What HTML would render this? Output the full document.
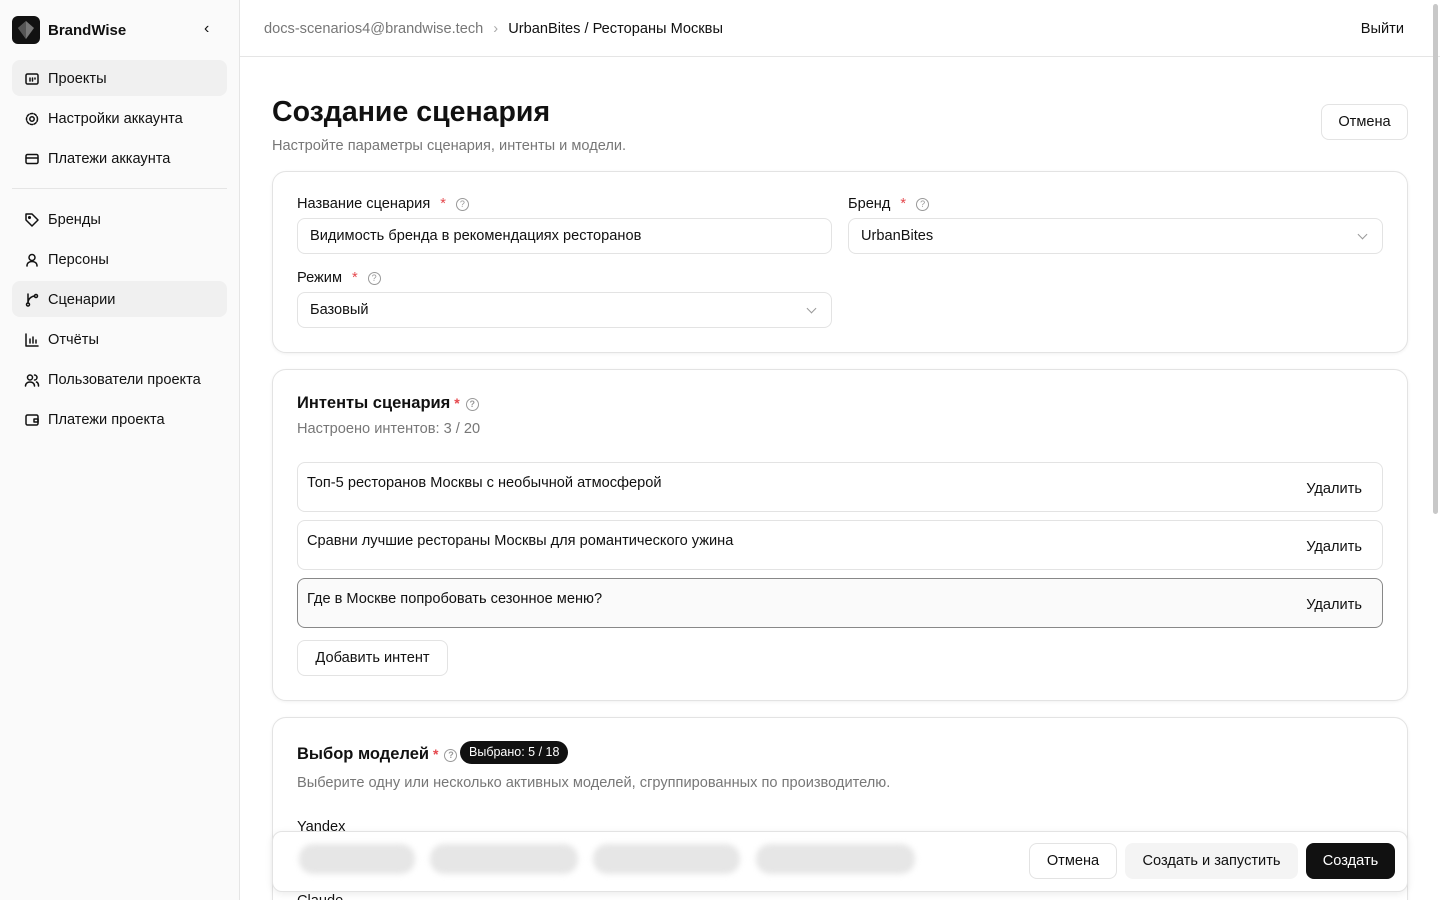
<!DOCTYPE html>
<html><head><meta charset="utf-8"><style>
*{box-sizing:border-box;margin:0;padding:0}
html{width:1440px;height:900px;overflow:hidden}
body{width:1440px;height:900px;overflow:hidden;font-family:"Liberation Sans","Noto Sans CJK SC",sans-serif;color:#111;background:#fff;position:relative;font-size:14.6px}
#w{position:absolute;left:0;top:0;width:1440px;height:900px;overflow:hidden}
.sb{position:absolute;left:0;top:0;width:240px;height:900px;background:#fafafa;border-right:1px solid #e5e5e5}
.logo{position:absolute;left:12px;top:16px;width:28px;height:28px;background:#111;border-radius:6px}
.brand{position:absolute;left:48px;top:22px;font-size:15px;font-weight:600}
.nav{position:absolute;left:12px;width:215px;height:36px;border-radius:8px;display:flex;align-items:center;padding-left:12px;padding-top:1px;font-size:14.6px}
.nav svg{width:16px;height:16px;margin-right:8px;fill:none;stroke:#111;stroke-width:1.5;stroke-linecap:round;stroke-linejoin:round}
.act{background:#f0f0f0}
.hdr{position:absolute;left:240px;top:0;right:0;height:57px;border-bottom:1px solid #e5e5e5}
.abs{position:absolute}
.card{position:absolute;left:272px;width:1136px;border:1px solid #e3e3e3;border-radius:14px;background:#fff;box-shadow:0 1px 3px rgba(0,0,0,.06)}
.lbl{position:absolute;font-size:14.6px;font-weight:500}
.req{color:#e5484d;margin-left:10px}
.q{display:inline-block;width:13px;height:13px;border:1px solid #999;border-radius:50%;font-size:9px;color:#999;text-align:center;line-height:11px;margin-left:10px;vertical-align:1px}
.inp{position:absolute;height:36px;border:1px solid #e3e3e3;border-radius:8px;padding-left:12px;line-height:35px;font-size:14.6px}
.chev{position:absolute;right:16px;top:12px;width:7px;height:7px;border-right:1px solid #999;border-bottom:1px solid #999;transform:rotate(45deg)}
.row{position:absolute;left:297px;width:1086px;height:50px;border:1px solid #e3e3e3;border-radius:8px}
.row span{position:absolute;left:9px;top:12px}
.row b{position:absolute;right:20px;top:18px;font-weight:500}
.btn{position:absolute;height:36px;border:1px solid #e3e3e3;border-radius:8px;font-size:14.6px;font-weight:500;text-align:center;line-height:35px;background:#fff}
.pill{position:absolute;top:844px;height:30px;border-radius:14px;background:#e6e6e6;filter:blur(3px)}
</style></head><body><div id="w">
<div class="sb">
<div class="logo"><svg width="28" height="28" viewBox="0 0 28 28"><path d="M14 5 L22 12 L14 23 L6 12 Z" fill="#777"/><path d="M14 5 L14 23 L6 12Z" fill="#555"/></svg></div>
<div class="brand">BrandWise</div>
<div class="abs" style="left:204px;top:20px;font-size:16px">&#x2039;</div>
<div class="nav act" style="top:60px"><svg viewBox="0 0 16 16"><rect x="2" y="3" width="12" height="10" rx="1.5"/><path d="M6 7v3M8.5 7v3M11 7v1"/></svg>Проекты</div>
<div class="nav" style="top:100px"><svg viewBox="0 0 16 16"><circle cx="8" cy="8" r="2.2"/><circle cx="8" cy="8" r="5.5" stroke-dasharray="2.5 1.5"/></svg>Настройки аккаунта</div>
<div class="nav" style="top:140px"><svg viewBox="0 0 16 16"><rect x="2" y="3.5" width="12" height="9" rx="1.5"/><path d="M2 7h12"/></svg>Платежи аккаунта</div>
<div class="abs" style="left:12px;top:188px;width:215px;height:1px;background:#e5e5e5"></div>
<div class="nav" style="top:201px"><svg viewBox="0 0 16 16"><path d="M2 2h6l6 6-6 6-6-6z"/><circle cx="5.5" cy="5.5" r=".8"/></svg>Бренды</div>
<div class="nav" style="top:241px"><svg viewBox="0 0 16 16"><circle cx="8" cy="5.5" r="3"/><path d="M3 14c0-3 2.2-4.5 5-4.5s5 1.5 5 4.5"/></svg>Персоны</div>
<div class="nav act" style="top:281px"><svg viewBox="0 0 16 16"><circle cx="4" cy="12.5" r="1.5"/><circle cx="12" cy="4" r="1.5"/><path d="M4 2v9M4 11c0-4 3-6.5 6.5-7"/></svg>Сценарии</div>
<div class="nav" style="top:321px"><svg viewBox="0 0 16 16"><path d="M2 2v12h12M6 11V7M9 11V5M12 11V8"/></svg>Отчёты</div>
<div class="nav" style="top:361px"><svg viewBox="0 0 16 16"><circle cx="6" cy="5.5" r="2.5"/><path d="M1.5 14c0-2.5 2-4 4.5-4s4.5 1.5 4.5 4M10.5 3a2.5 2.5 0 010 5M12.5 10c1.3.5 2 2 2 4"/></svg>Пользователи проекта</div>
<div class="nav" style="top:401px"><svg viewBox="0 0 16 16"><rect x="2" y="3" width="12" height="10" rx="1.5"/><path d="M10 7h4v3h-4z"/></svg>Платежи проекта</div>
</div>
<div class="hdr">
<div class="abs" style="left:24px;top:21px;color:#777;white-space:nowrap">docs-scenarios4@brandwise.tech <span style="margin:0 6px;color:#aaa">›</span> <span style="color:#111;font-weight:500">UrbanBites / Рестораны Москвы</span></div>
<div class="abs" style="right:36px;top:21px;font-weight:500">Выйти</div>
</div>
<div class="abs" style="right:2px;top:4px;width:5px;height:510px;border-radius:3px;background:#c8c8c8"></div>
<div class="abs" style="left:272px;top:96px;font-size:28.5px;font-weight:600">Создание сценария</div>
<div class="abs" style="left:272px;top:138px;color:#777">Настройте параметры сценария, интенты и модели.</div>
<div class="btn" style="left:1321px;top:104px;width:87px">Отмена</div>

<div class="card" style="top:171px;height:182px"></div>
<div class="lbl" style="left:297px;top:196px">Название сценария<span class="req">*</span><span class="q">?</span></div>
<div class="inp" style="left:297px;top:218px;width:535px">Видимость бренда в рекомендациях ресторанов</div>
<div class="lbl" style="left:848px;top:196px">Бренд<span class="req">*</span><span class="q">?</span></div>
<div class="inp" style="left:848px;top:218px;width:535px">UrbanBites<div class="chev"></div></div>
<div class="lbl" style="left:297px;top:270px">Режим<span class="req">*</span><span class="q">?</span></div>
<div class="inp" style="left:297px;top:292px;width:535px">Базовый<div class="chev"></div></div>

<div class="card" style="top:369px;height:332px"></div>
<div class="abs" style="left:297px;top:394px;font-size:16.5px;font-weight:600">Интенты сценария<span style="color:#e5484d;font-size:14px;margin-left:4px">*</span><span class="q" style="margin-left:6px">?</span></div>
<div class="abs" style="left:297px;top:421px;color:#777">Настроено интентов: 3 / 20</div>
<div class="row" style="top:462px"><span>Топ-5 ресторанов Москвы с необычной атмосферой</span><b>Удалить</b></div>
<div class="row" style="top:520px"><span>Сравни лучшие рестораны Москвы для романтического ужина</span><b>Удалить</b></div>
<div class="row" style="top:578px;background:#fafafa;border-color:#888"><span>Где в Москве попробовать сезонное меню?</span><b>Удалить</b></div>
<div class="btn" style="left:297px;top:640px;width:151px">Добавить интент</div>

<div class="card" style="top:717px;height:240px"></div>
<div class="abs" style="left:297px;top:745px;font-size:16.5px;font-weight:600;white-space:nowrap">Выбор моделей<span style="color:#e5484d;font-size:14px;margin-left:4px">*</span><span class="q" style="margin-left:6px">?</span></div>
<div class="abs" style="left:460px;top:741px;height:23px;padding:0 9px;border-radius:12px;background:#111;color:#fff;font-size:12.5px;line-height:23px;font-weight:500;white-space:nowrap">Выбрано: 5 / 18</div>
<div class="abs" style="left:297px;top:775px;color:#777">Выберите одну или несколько активных моделей, сгруппированных по производителю.</div>
<div class="abs" style="left:297px;top:819px">Yandex</div>
<div class="abs" style="left:297px;top:893px">Claude</div>
<div class="abs" style="left:272px;top:831px;width:1136px;height:61px;background:#fff;border:1px solid #e3e3e3;border-radius:10px;box-shadow:0 2px 8px rgba(0,0,0,.08)"></div>
<div class="pill" style="left:299px;width:116px"></div>
<div class="pill" style="left:430px;width:148px"></div>
<div class="pill" style="left:593px;width:147px"></div>
<div class="pill" style="left:756px;width:159px"></div>
<div class="btn" style="left:1029px;top:843px;width:88px">Отмена</div>
<div class="btn" style="left:1125px;top:843px;width:173px;background:#f4f4f4;border-color:#f4f4f4">Создать и запустить</div>
<div class="btn" style="left:1306px;top:843px;width:89px;background:#111;border-color:#111;color:#fff">Создать</div>
</div></body></html>
